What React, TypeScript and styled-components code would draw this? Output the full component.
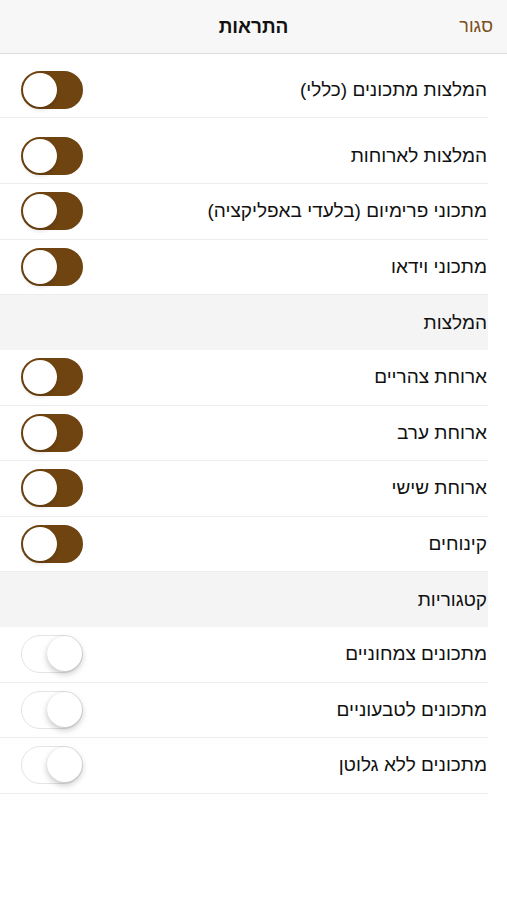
import styled, { createGlobalStyle } from 'styled-components';

const GlobalStyle = createGlobalStyle`
  html, body {
    margin: 0;
    padding: 0;
    background: #ffffff;
  }
  body {
    font-family: 'Liberation Sans', 'DejaVu Sans', Arial, sans-serif;
    color: #111111;
  }
`;

type Item = { label: string; on: boolean; extra?: number };
type Group = { title?: string; items: Item[] };

const groups: Group[] = [
  {
    items: [
      { label: 'המלצות מתכונים (כללי)', on: true, extra: 8.5 },
      { label: 'המלצות לארוחות', on: true, extra: 10.5 },
      { label: 'מתכוני פרימיום (בלעדי באפליקציה)', on: true },
      { label: 'מתכוני וידאו', on: true },
    ],
  },
  {
    title: 'המלצות',
    items: [
      { label: 'ארוחת צהריים', on: true },
      { label: 'ארוחת ערב', on: true },
      { label: 'ארוחת שישי', on: true },
      { label: 'קינוחים', on: true },
    ],
  },
  {
    title: 'קטגוריות',
    items: [
      { label: 'מתכונים צמחוניים', on: false },
      { label: 'מתכונים לטבעוניים', on: false },
      { label: 'מתכונים ללא גלוטן', on: false },
    ],
  },
];

const App = () => {
  return (
    <Page>
      <GlobalStyle />
      <TopBar>
        <CloseButton>סגור</CloseButton>
        <Title>התראות</Title>
        <Spacer />
      </TopBar>
      <List>
        {groups.map((group, gi) => (
          <div key={gi}>
            {group.title ? <SectionHeader>{group.title}</SectionHeader> : null}
            {group.items.map(item => (
              <Row key={item.label} $extra={item.extra || 0}>
                <Label>{item.label}</Label>
                <Switch $on={item.on}>
                  <Knob $on={item.on} />
                </Switch>
              </Row>
            ))}
          </div>
        ))}
      </List>
    </Page>
  );
};

export default App;

const Page = styled.div`
  width: 507px;
  min-height: 900px;
  background: #ffffff;
`;

const TopBar = styled.header`
  direction: rtl;
  display: flex;
  align-items: center;
  justify-content: space-between;
  height: 54px;
  padding: 0 14px;
  box-sizing: border-box;
  background: #f7f7f7;
  border-bottom: 1px solid #dcdcdc;
`;

const CloseButton = styled.div`
  width: 60px;
  font-size: 18px;
  color: #7c4f1c;
`;

const Title = styled.div`
  font-size: 19px;
  font-weight: bold;
  color: #111111;
`;

const Spacer = styled.div`
  width: 60px;
`;

const List = styled.div`
  width: 488px;
`;

const SectionHeader = styled.div`
  direction: rtl;
  display: flex;
  align-items: center;
  height: 55px;
  padding-right: 1px;
  box-sizing: border-box;
  background: #f4f4f4;
  font-size: 19px;
  color: #111111;
`;

const Row = styled.div<{ $extra: number }>`
  direction: rtl;
  display: flex;
  align-items: center;
  justify-content: space-between;
  height: ${p => 55.5 + p.$extra}px;
  padding: ${p => p.$extra}px 1px 0 21px;
  box-sizing: border-box;
  border-bottom: 1px solid #ececec;
`;

const Label = styled.div`
  font-size: 19px;
  color: #111111;
`;

const Switch = styled.div<{ $on: boolean }>`
  direction: ltr;
  display: flex;
  justify-content: ${p => (p.$on ? 'flex-start' : 'flex-end')};
  width: 62px;
  height: 38px;
  border-radius: 19px;
  box-sizing: border-box;
  background: ${p => (p.$on ? '#6f4411' : '#ffffff')};
  border: ${p => (p.$on ? '2px solid #6f4411' : '1.5px solid #e4e4e4')};
`;

const Knob = styled.div<{ $on: boolean }>`
  width: ${p => (p.$on ? '34px' : '35px')};
  height: ${p => (p.$on ? '34px' : '35px')};
  border-radius: 50%;
  background: #ffffff;
  box-shadow: ${p =>
    p.$on
      ? '0 3px 4px rgba(0, 0, 0, 0.12)'
      : '0 3px 6px rgba(0, 0, 0, 0.22), 0 0 1px rgba(0, 0, 0, 0.15)'};
`;
